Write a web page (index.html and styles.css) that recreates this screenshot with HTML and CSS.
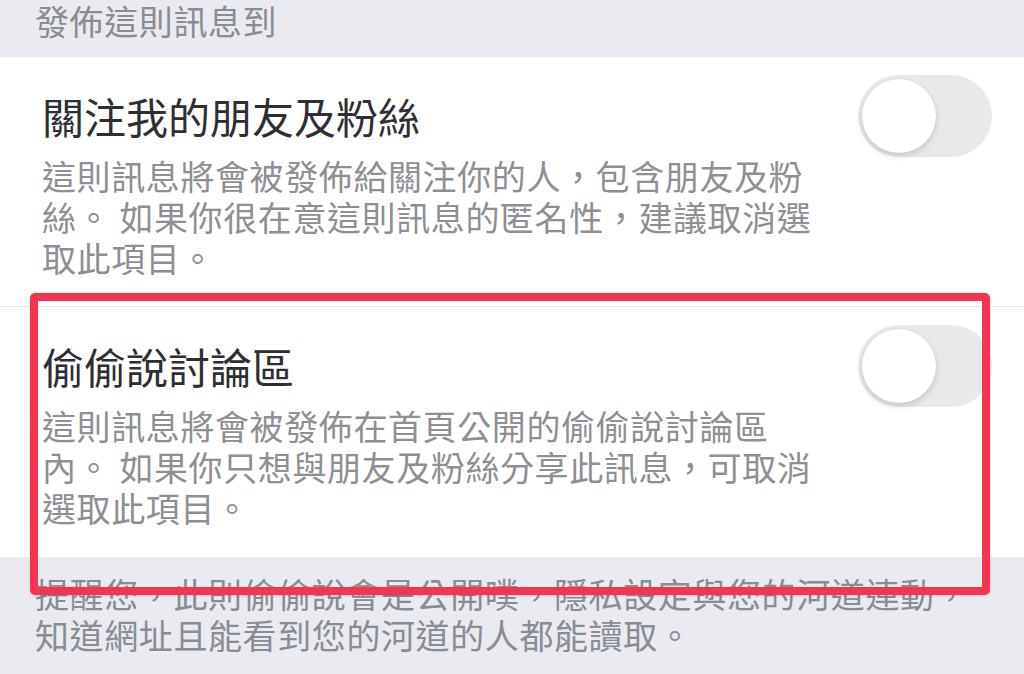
FILE: index.html
```html
<!DOCTYPE html>
<html lang="zh-Hant">
  <head>
    <meta charset="UTF-8" />
    <title>發佈這則訊息到</title>
    <link rel="stylesheet" href="styles.css">
  </head>
  <body>
    <div class="section-header">發佈這則訊息到</div>

    <div class="option-list">
      <div class="option">
        <div class="option-head">
          <div class="option-title">關注我的朋友及粉絲</div>
          <div class="toggle"><div class="knob"></div></div>
        </div>
        <div class="option-desc">
          這則訊息將會被發佈給關注你的人，包含朋友及粉<br>絲。 如果你很在意這則訊息的匿名性，建議取消選<br>取此項目。
        </div>
      </div>

      <div class="option">
        <div class="option-head">
          <div class="option-title">偷偷說討論區</div>
          <div class="toggle"><div class="knob"></div></div>
        </div>
        <div class="option-desc">
          這則訊息將會被發佈在首頁公開的偷偷說討論區<br>內。 如果你只想與朋友及粉絲分享此訊息，可取消<br>選取此項目。
        </div>
      </div>
    </div>

    <div class="section-footer">
      提醒您，此則偷偷說會是公開噗，隱私設定與您的河道連動，<br>知道網址且能看到您的河道的人都能讀取。
    </div>

    <!-- highlight box drawn over the second option -->
    <div class="highlight"></div>
  </body>
</html>
```

FILE: styles.css
```css
body {
  margin: 0;
  position: relative;
  height: 674px;
  overflow: hidden;
  background-color: #e9ebf0;
  font-family: "Noto Sans CJK TC", "Noto Sans", sans-serif;
}

.section-header {
  height: 57px;
  padding-left: 35px;
  font-size: 34px;
  line-height: 41px;
  letter-spacing: 0.6px;
  color: #8a8c92;
}

.option-list {
  background-color: #ffffff;
}

.option {
  padding: 18px 32px 28px 42px;
}

.option + .option {
  border-top: 1px solid #e4e4e8;
  padding-bottom: 29px;
}

.option-head {
  display: flex;
  align-items: center;
  justify-content: space-between;
  height: 82px;
}

.option-title {
  font-size: 42px;
  line-height: 50px;
  color: #2e2e33;
}

.option-desc {
  margin-top: -2px;
  font-size: 34px;
  line-height: 41px;
  letter-spacing: 0.6px;
  color: #8e8e93;
  white-space: nowrap;
}

.toggle {
  width: 134px;
  height: 82px;
  border-radius: 41px;
  background-color: #e9e9eb;
  display: flex;
  align-items: center;
  padding-left: 4px;
  box-sizing: border-box;
}

.knob {
  width: 74px;
  height: 74px;
  border-radius: 50%;
  background-color: #ffffff;
  box-shadow: 0 3px 6px rgba(0, 0, 0, 0.15), 0 0 1px rgba(0, 0, 0, 0.12);
}

.section-footer {
  padding: 16px 0 0 35px;
  font-size: 34px;
  line-height: 41px;
  letter-spacing: 0.6px;
  color: #8a8c94;
  white-space: nowrap;
}

.highlight {
  position: absolute;
  left: 30px;
  top: 293px;
  width: 960px;
  height: 302px;
  box-sizing: border-box;
  border: 8px solid #f5344f;
  border-radius: 5px;
  box-shadow: 0 1px 3px rgba(0, 0, 0, 0.15);
}
```
